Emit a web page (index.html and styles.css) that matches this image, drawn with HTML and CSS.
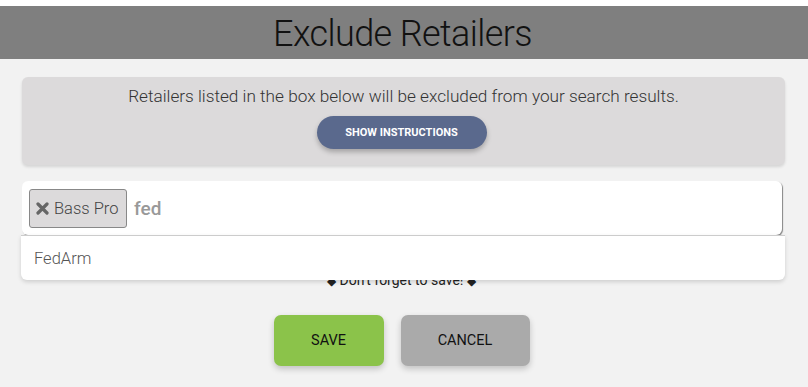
FILE: index.html
```html
<!DOCTYPE html>
<html>
<head>
<meta charset="utf-8">
<link rel="stylesheet" href="styles.css">
</head>
<body>
<div class="topstrip"></div>
<header class="header"><h1 class="title">Exclude Retailers</h1></header>
<main class="main">
  <section class="info">
    <p class="info-text">Retailers listed in the box below will be excluded from your search results.</p>
    <button class="btn-instructions">SHOW INSTRUCTIONS</button>
  </section>
  <div class="picker">
    <div class="input-box">
      <span class="chip"><svg class="chip-x" width="13" height="13" viewBox="0 0 13 13"><path d="M2 2 L11 11 M11 2 L2 11" stroke="#666" stroke-width="3.2" stroke-linecap="round"/></svg>Bass Pro</span>
      <span class="typed">fed</span>
    </div>
    <ul class="dropdown">
      <li class="option">FedArm</li>
    </ul>
  </div>
  <p class="note"><span class="diamond">◆</span> Don't forget to save! <span class="diamond">◆</span></p>
  <div class="actions">
    <button class="btn btn-save">SAVE</button>
    <button class="btn btn-cancel">CANCEL</button>
  </div>
</main>
</body>
</html>
```
FILE: styles.css
```css
* { box-sizing: border-box; }
html, body { margin: 0; padding: 0; }
body {
  background: #f2f2f2;
  font-family: Roboto, "Liberation Sans", sans-serif;
  width: 808px;
  height: 387px;
  overflow: hidden;
}
.topstrip { height: 6px; background: #ffffff; }
.header {
  background: #7f7f7f;
  height: 53px;
  display: flex;
  align-items: center;
  justify-content: center;
}
.title {
  margin: 0;
  font-weight: 300;
  font-size: 36px;
  letter-spacing: -0.6px;
  color: #111;
  line-height: 1;
  padding-top: 2px;
  padding-right: 3px;
}
.main { padding: 18px 23px 0 22px; }
.info {
  background: #dcdadb;
  border-radius: 6px;
  height: 88px;
  box-shadow: 0 2px 3px rgba(0,0,0,0.12);
  display: flex;
  flex-direction: column;
  align-items: center;
  padding-top: 8px;
}
.info-text {
  margin: 0;
  font-size: 17.2px;
  font-weight: 300;
  color: #333;
  line-height: 23px;
}
.btn-instructions {
  margin-top: 8px;
  width: 170px;
  height: 33px;
  border: none;
  border-radius: 17px;
  background: #5a698d;
  color: #fff;
  font-family: Roboto, "Liberation Sans", sans-serif;
  font-weight: 700;
  font-size: 11px;
  box-shadow: 0 3px 5px rgba(0,0,0,0.25);
  transform: translateX(-2px);
}
.picker { position: relative; margin-top: 16px; margin-right: 3px; }
.input-box {
  background: #fff;
  height: 54px;
  border-radius: 6px;
  box-shadow: 1px 1px 1px rgba(0,0,0,0.45);
  display: flex;
  align-items: center;
  padding-left: 7px;
  gap: 7px;
}
.chip {
  height: 39px;
  width: 98px;
  display: flex;
  align-items: center;
  background: #dcdadb;
  border: 1px solid #888;
  border-radius: 3px;
  padding-left: 6px;
  font-size: 16.5px;
  font-weight: 300;
  color: #444;
}
.chip-x { margin-right: 5px; flex: none; }
.typed { font-size: 19px; font-weight: 500; color: #999; }
.dropdown {
  position: absolute;
  top: 100%;
  left: -1px;
  right: -3px;
  margin: 0;
  padding: 0;
  list-style: none;
  background: #fff;
  border-top: 1px solid #ccc;
  border-radius: 0 0 6px 6px;
  box-shadow: 0 2px 4px rgba(0,0,0,0.15);
  height: 45px;
}
.option {
  height: 44px;
  display: flex;
  align-items: center;
  padding-left: 13px;
  font-size: 16.5px;
  font-weight: 300;
  color: #555;
}
.note {
  margin: 37px 0 0;
  text-align: center;
  font-size: 14px;
  color: #222;
  line-height: 16px;
  padding-right: 4px;
}
.diamond { font-size: 12px; vertical-align: 0; }
.actions {
  display: flex;
  justify-content: center;
  gap: 17px;
  margin-top: 26px;
  padding-right: 4px;
}
.btn {
  height: 51px;
  border: none;
  border-radius: 7px;
  font-family: Roboto, "Liberation Sans", sans-serif;
  font-size: 14.5px;
  color: #111;
  box-shadow: 0 3px 6px rgba(0,0,0,0.2);
}
.btn-save { width: 110px; background: #8bc34a; }
.btn-cancel { width: 129px; background: #aaaaaa; }
```
